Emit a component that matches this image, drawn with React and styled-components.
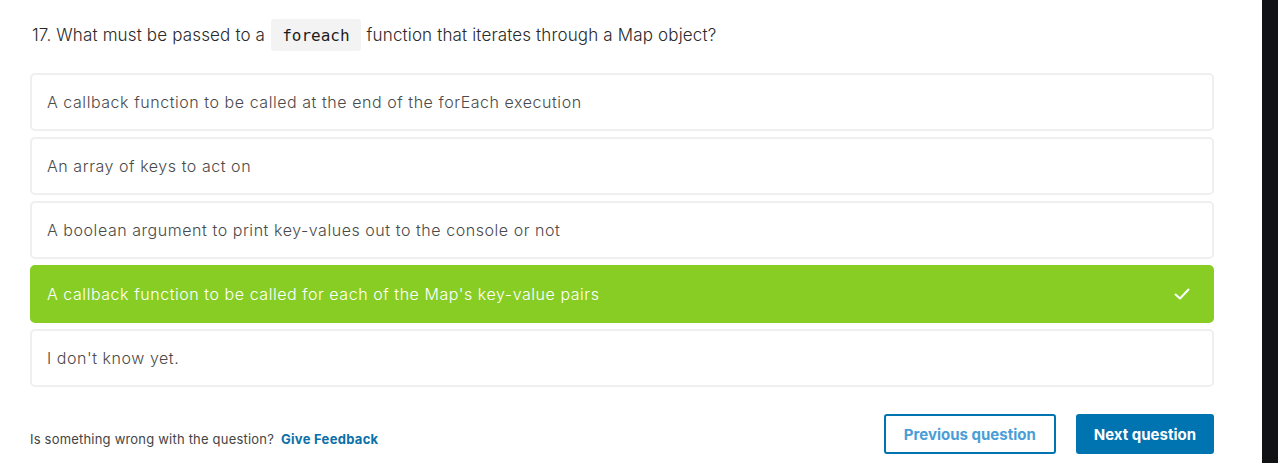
import React from "react";
import styled, { createGlobalStyle } from "styled-components";

const Global = createGlobalStyle`
  html, body { margin: 0; padding: 0; background: #fff; }
  body { font-family: Inter, "Noto Sans", sans-serif; color: #222; }
  * { box-sizing: border-box; }
`;

const Page = styled.div`
  display: flex;
  height: 463px;
  overflow: hidden;
`;

const Main = styled.div`
  flex: 1;
  padding: 19px 0 0 30px;
`;

const Scrollbar = styled.div`
  width: 16px;
  background: #111216;
`;

const Content = styled.div`
  width: 1184px;
`;

const Question = styled.div`
  display: flex;
  align-items: center;
  font-size: 17px;
  font-weight: 300;
  letter-spacing: 0.15px;
  color: #2a2a2a;
  padding-left: 2px;
  height: 32px;
  margin-bottom: 22px;
`;

const Code = styled.code`
  display: inline-flex;
  align-items: center;
  height: 32px;
  padding: 0 11px;
  margin: 0 6px;
  background: #f3f3f3;
  border-radius: 3px;
  font-family: "DejaVu Sans Mono", monospace;
  font-size: 16px;
  letter-spacing: 0;
  color: #1c1c1c;
`;

const Options = styled.div`
  display: flex;
  flex-direction: column;
  gap: 6px;
`;

const Option = styled.div`
  display: flex;
  align-items: center;
  justify-content: space-between;
  height: 58px;
  padding: 0 22px 0 15px;
  border: 2px solid ${(p) => (p.$correct ? "#88cd24" : "#efefef")};
  border-radius: 5px;
  background: ${(p) => (p.$correct ? "#88cd24" : "#fff")};
  color: ${(p) => (p.$correct ? "#fff" : "#4a4a4a")};
  font-size: 16px;
  font-weight: 300;
  letter-spacing: 0.55px;
`;

const Footer = styled.div`
  display: flex;
  align-items: center;
  justify-content: space-between;
  margin-top: 27px;
`;

const Feedback = styled.div`
  font-size: 13px;
  letter-spacing: 0.2px;
  color: #444;
  padding-top: 9px;
  a {
    color: #0a70a8;
    font-weight: 700;
    text-decoration: none;
    margin-left: 3px;
    letter-spacing: 0.3px;
  }
`;

const Buttons = styled.div`
  display: flex;
  gap: 20px;
`;

const Button = styled.button`
  height: 40px;
  padding: 0 ${(p) => (p.$primary ? 16 : 18)}px;
  border-radius: 3px;
  font-family: Inter, "Noto Sans", sans-serif;
  font-size: 15px;
  font-weight: 700;
  cursor: pointer;
  border: 2px solid #0073b1;
  background: ${(p) => (p.$primary ? "#0073b1" : "#fff")};
  color: ${(p) => (p.$primary ? "#fff" : "#4a9ed6")};
`;

const Check = () => (
  <svg width="16" height="12" viewBox="0 0 16 12" fill="none">
    <path d="M1.5 6.5 L6 10.5 L14.5 1.5" stroke="#fff" strokeWidth="2" strokeLinecap="round" strokeLinejoin="round" />
  </svg>
);

const answers = [
  "A callback function to be called at the end of the forEach execution",
  "An array of keys to act on",
  "A boolean argument to print key-values out to the console or not",
  "A callback function to be called for each of the Map's key-value pairs",
  "I don't know yet.",
];

export default function App() {
  return (
    <Page>
      <Global />
      <Main>
        <Content>
          <Question>
            17. What must be passed to a <Code>foreach</Code> function that iterates through a Map object?
          </Question>
          <Options>
            {answers.map((a, i) => (
              <Option key={i} $correct={i === 3}>
                <span>{a}</span>
                {i === 3 && <Check />}
              </Option>
            ))}
          </Options>
          <Footer>
            <Feedback>
              Is something wrong with the question? <a href="#">Give Feedback</a>
            </Feedback>
            <Buttons>
              <Button>Previous question</Button>
              <Button $primary>Next question</Button>
            </Buttons>
          </Footer>
        </Content>
      </Main>
      <Scrollbar />
    </Page>
  );
}
